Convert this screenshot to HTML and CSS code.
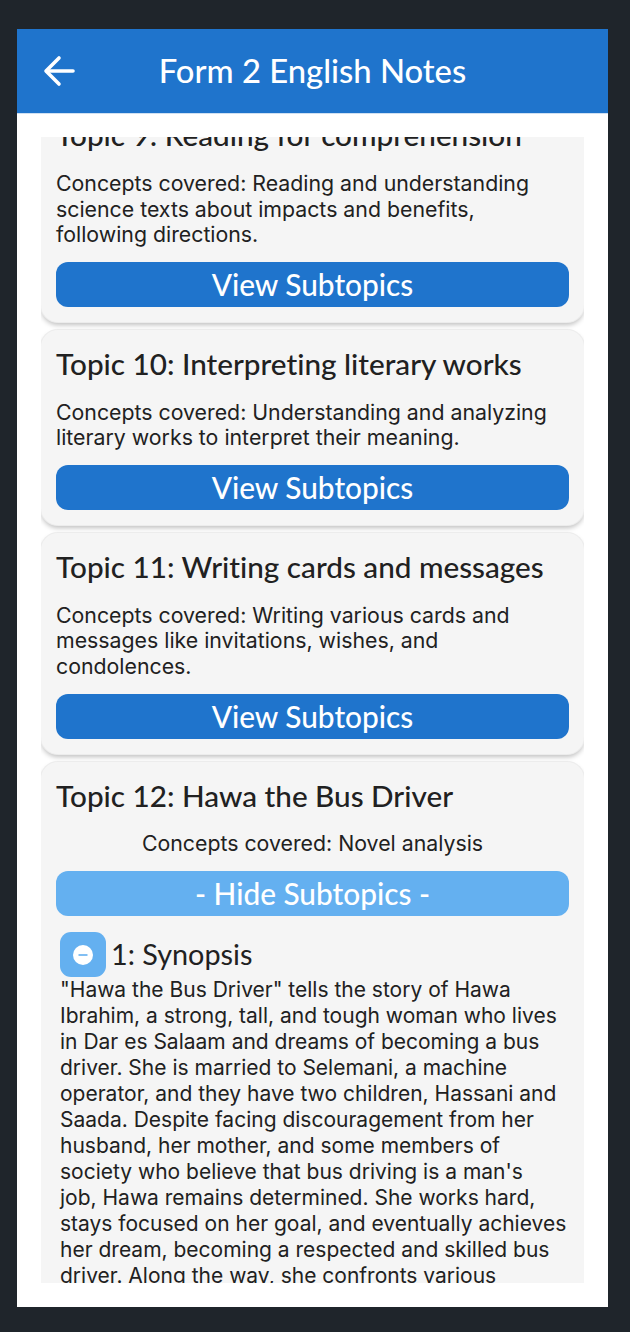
FILE: index.html
```html
<!DOCTYPE html>
<html lang="en">
<head>
<meta charset="utf-8">
<title>Form 2 English Notes</title>
<link rel="stylesheet" href="styles.css">
</head>
<body>
<main class="phone">
  <header class="appbar">
    <button class="back" aria-label="Back">
      <svg width="34" height="34" viewBox="0 0 34 34" fill="none" stroke="#fff" stroke-width="3.6" stroke-linecap="round" stroke-linejoin="round"><path d="M31 17H5"/><path d="M17 4 4 17l13 13"/></svg>
    </button>
    <h1 class="title">Form 2 English Notes</h1>
  </header>
  <div class="viewport">
    <div class="list">
      <section class="card">
        <h2 class="topic">Topic 9: Reading for comprehension</h2>
        <p class="concepts">Concepts covered: Reading and understanding science texts about impacts and benefits, following directions.</p>
        <button class="action">View Subtopics</button>
      </section>
      <section class="card">
        <h2 class="topic">Topic 10: Interpreting literary works</h2>
        <p class="concepts">Concepts covered: Understanding and analyzing literary works to interpret their meaning.</p>
        <button class="action">View Subtopics</button>
      </section>
      <section class="card">
        <h2 class="topic">Topic 11: Writing cards and messages</h2>
        <p class="concepts">Concepts covered: Writing various cards and messages like invitations, wishes, and condolences.</p>
        <button class="action">View Subtopics</button>
      </section>
      <section class="card">
        <h2 class="topic">Topic 12: Hawa the Bus Driver</h2>
        <p class="concepts centered">Concepts covered: Novel analysis</p>
        <button class="action open">- Hide Subtopics -</button>
        <div class="subtopic">
          <div class="sub-head">
            <span class="toggle"><svg width="20" height="20" viewBox="0 0 20 20"><circle cx="10" cy="10" r="10" fill="#fff"/><rect x="5.5" y="9.2" width="9" height="1.6" fill="#64b0f0"/></svg></span>
            <h3 class="sub-title">1: Synopsis</h3>
          </div>
          <p class="sub-text">"Hawa the Bus Driver" tells the story of Hawa Ibrahim, a strong, tall, and tough woman who lives in Dar es Salaam and dreams of becoming a bus driver. She is married to Selemani, a machine operator, and they have two children, Hassani and Saada. Despite facing discouragement from her husband, her mother, and some members of society who believe that bus driving is a man's<br>job, Hawa remains determined. She works hard, stays focused on her goal, and eventually achieves her dream, becoming a respected and skilled bus driver. Along the way, she confronts various challenges and proves that women can succeed.</p>
        </div>
      </section>
    </div>
  </div>
</main>
</body>
</html>
```
FILE: styles.css
```css
* { box-sizing: border-box; }

html, body { height: 100%; }

body {
  margin: 0;
  padding: 29px 22px 25px 17px;
  background: #1f252b;
  font-family: Inter, "Liberation Sans", sans-serif;
  color: #212121;
}

.phone {
  height: 1278px;
  background: #fff;
  display: flex;
  flex-direction: column;
}

.appbar {
  height: 85px;
  flex: none;
  display: flex;
  align-items: center;
  justify-content: center;
  position: relative;
  background: #1f74cc;
  border-bottom: 1px solid #cfe0f2;
}

.back {
  position: absolute;
  left: 25px;
  top: 25px;
  padding: 0;
  border: 0;
  background: none;
  display: flex;
}

.title {
  margin: 0;
  color: #fff;
  font: 500 32.8px/1 Lato, sans-serif;
  font-variant-ligatures: none;
}

.viewport {
  height: 1146px;
  margin: 23px 24px 0;
  overflow: hidden;
}

.list {
  margin-top: -35.7px;
  display: flex;
  flex-direction: column;
  gap: 8px;
}

.card {
  padding: 15px;
  background: #f5f5f5;
  border-radius: 17px;
  box-shadow: 0 0 0 1px #ececec, 0 3px 5px rgba(0, 0, 0, .25);
}

.topic {
  margin: 0;
  font: 500 29.7px/38px Lato, sans-serif;
  font-variant-ligatures: none;
  white-space: nowrap;
}

.concepts {
  margin: 16.6px 0 14px;
  font-size: 21.3px;
  line-height: 25.7px;
}

.centered { text-align: center; }

.action {
  display: block;
  width: 100%;
  height: 45px;
  padding: 0;
  border: 0;
  border-radius: 12px;
  background: #1f74cc;
  color: #fff;
  font: 500 29.8px/45px Lato, sans-serif;
}

.action.open { background: #64b0f0; }

.subtopic { padding: 16px 0 0 4px; }

.sub-head {
  display: flex;
  align-items: center;
  gap: 5px;
}

.toggle {
  width: 46px;
  height: 45px;
  border-radius: 11px;
  background: #64b0f0;
  display: flex;
  align-items: center;
  justify-content: center;
}

.sub-title {
  margin: 0;
  font: 400 28.8px/1 Lato, sans-serif;
}

.sub-text {
  margin: 0;
  font-size: 21px;
  line-height: 26px;
}
```
